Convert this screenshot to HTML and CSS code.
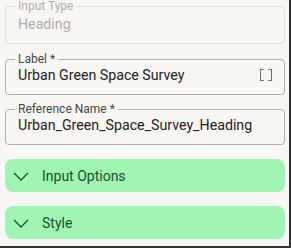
FILE: index.html
```html
<!DOCTYPE html>
<html lang="en">
<head>
    <meta charset="UTF-8">
    <meta name="viewport" content="width=device-width, initial-scale=1.0">
    <title>Heading properties</title>
    <link rel="stylesheet" href="styles.css">
</head>
<body>
    <div class="panel">
        <!-- Read-only type -->
        <fieldset class="field disabled">
            <legend>Input Type</legend>
            <div class="field-value">Heading</div>
        </fieldset>

        <!-- Label -->
        <fieldset class="field">
            <legend>Label *</legend>
            <div class="field-row">
                <div class="field-value">Urban Green Space Survey</div>
                <svg class="field-icon" viewBox="0 0 24 24" width="18" height="18">
                    <path d="M15 4v1.3h3.7v13.4H15V20h5V4zM4 20h5v-1.3H5.3V5.3H9V4H4z" fill="#6b6965"/>
                </svg>
            </div>
        </fieldset>

        <!-- Reference name -->
        <fieldset class="field">
            <legend>Reference Name *</legend>
            <div class="field-value">Urban_Green_Space_Survey_Heading</div>
        </fieldset>

        <!-- Collapsed sections -->
        <div class="section">
            <svg class="chevron" viewBox="0 0 16 9" width="16" height="9">
                <polyline points="1,1 8,8 15,1" fill="none" stroke="#1d4f2f" stroke-width="1.3"/>
            </svg>
            Input Options
        </div>
        <div class="section">
            <svg class="chevron" viewBox="0 0 16 9" width="16" height="9">
                <polyline points="1,1 8,8 15,1" fill="none" stroke="#1d4f2f" stroke-width="1.3"/>
            </svg>
            Style
        </div>
    </div>
</body>
</html>
```

FILE: styles.css
```css
body {
    margin: 0;
    font-family: Roboto, "Noto Sans", sans-serif;
    background: #f9f7f4;
}

.panel {
    width: 280px;
    height: 246px;
    padding: 0 4px 0 5px;
    border-right: 2px solid #333;
    border-bottom: 2px solid #333;
    overflow: hidden;
}

/* Outlined fields */
.field {
    margin: 0 0 7px;
    padding: 0 9px 9px 9px;
    border: 1px solid #b3b0ab;
    border-radius: 4px;
    min-width: 0;
}

.field legend {
    padding: 0 3px;
    font-size: 12px;
    line-height: 14px;
    color: #4a4845;
}

.field-value {
    padding-left: 3px;
    margin-top: -1px;
    font-size: 14.2px;
    line-height: 20px;
    color: #222;
    white-space: nowrap;
}

.field-row {
    display: flex;
    align-items: center;
    justify-content: space-between;
}

.field-icon {
    margin-top: -1px;
}

.disabled {
    margin-top: -1px;
    margin-bottom: 8px;
    border-color: #e2dfda;
}

.disabled .field-value {
    margin-top: 1px;
}

.disabled legend,
.disabled .field-value {
    color: #b1afab;
}

/* Accordion headers */
.section {
    display: flex;
    align-items: center;
    gap: 13px;
    height: 33px;
    margin-top: 14px;
    padding-left: 8px;
    background: #a0f5b4;
    border-radius: 8px;
    font-size: 14px;
    color: #1d4f2f;
}

.chevron {
    margin-top: 1px;
}
```
